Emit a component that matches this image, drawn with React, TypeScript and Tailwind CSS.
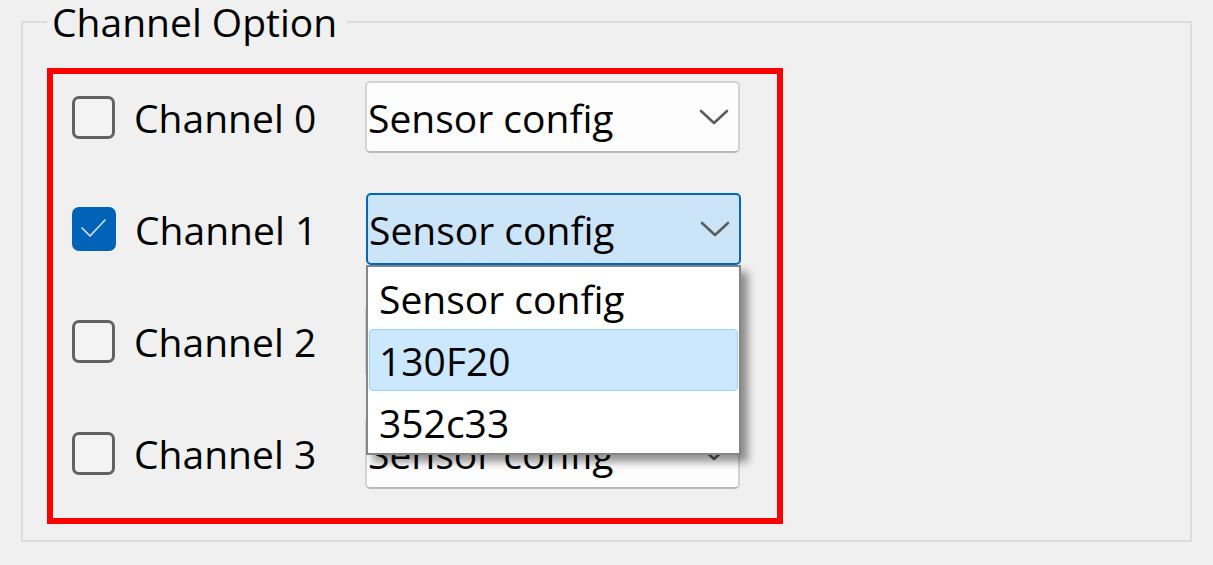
type Channel = {
  id: number;
  checked: boolean;
  open: boolean;
};

const channels: Channel[] = [
  { id: 0, checked: false, open: false },
  { id: 1, checked: true, open: true },
  { id: 2, checked: false, open: false },
  { id: 3, checked: false, open: false },
];

const options = ["Sensor config", "130F20", "352c33"];

function Chevron() {
  return (
    <svg width="30" height="17" viewBox="0 0 30 17" className="shrink-0">
      <polyline points="2,2 15,14 28,2" fill="none" stroke="#5c5c5c" strokeWidth="2.6" strokeLinecap="round" strokeLinejoin="round" />
    </svg>
  );
}

function CheckBox({ checked }: { checked: boolean }) {
  if (checked) {
    return (
      <div className="flex h-[44px] w-[44px] shrink-0 items-center justify-center rounded-[7px] bg-[#0063b8]">
        <svg width="44" height="44" viewBox="0 0 44 44">
          <polyline points="10,21 18,29 33,13" fill="none" stroke="#d2e2f3" strokeWidth="1.7" strokeLinecap="round" strokeLinejoin="round" />
        </svg>
      </div>
    );
  }
  return <div className="h-[43px] w-[43px] shrink-0 rounded-[7px] border-[3px] border-[#626262] bg-[#f3f3f3]" />;
}

function Combo({ open }: { open: boolean }) {
  return (
    <div className="relative w-[375px]">
      <div
        className={
          open
            ? "flex h-[72px] items-center justify-between rounded-[5px] border-2 border-[#0067c0] bg-[#cce4f7] pr-[9px]"
            : "flex h-[72px] items-center justify-between rounded-[5px] border-2 border-[#d3d3d3] border-b-[#bababa] bg-[#fdfdfd] pr-[9px]"
        }
      >
        <span className="pl-[1px]">Sensor config</span>
        <Chevron />
      </div>
      {open && (
        <div className="absolute left-0 top-full z-10 w-[375px] border-2 border-[#858585] bg-white px-px shadow-[7px_7px_8px_rgba(0,0,0,0.42)]">
          {options.map((opt, i) => (
            <div
              key={opt}
              className={
                i === 1
                  ? "flex h-[62px] items-center rounded-[4px] border border-[#99d1ff] bg-[#cce8ff] pl-[9px]"
                  : "flex h-[62px] items-center border border-transparent pl-[9px]"
              }
            >
              {opt}
            </div>
          ))}
        </div>
      )}
    </div>
  );
}

export default function App() {
  return (
    <div className="h-[565px] w-[1213px] overflow-hidden bg-[#f0f0f0] pt-[2px] font-['Open_Sans',sans-serif] text-[39px] leading-none text-black">
      <fieldset className="ml-[21px] w-[1171px] border-2 border-[#dcdcdc] pb-[16px] pl-[24px] pt-[26px]">
        <legend className="pl-[5px] pr-[10px] leading-[40px]">Channel Option</legend>
        <div className="flex w-[736px] flex-col gap-[40px] border-[6px] border-[#ff0000] pb-[29px] pt-[7px]">
          {channels.map((ch) => (
            <div key={ch.id} className="flex h-[72px] items-center pl-[19px]">
              <CheckBox checked={ch.checked} />
              <span className="ml-[19px] w-[231px]">Channel {ch.id}</span>
              <Combo open={ch.open} />
            </div>
          ))}
        </div>
      </fieldset>
    </div>
  );
}
